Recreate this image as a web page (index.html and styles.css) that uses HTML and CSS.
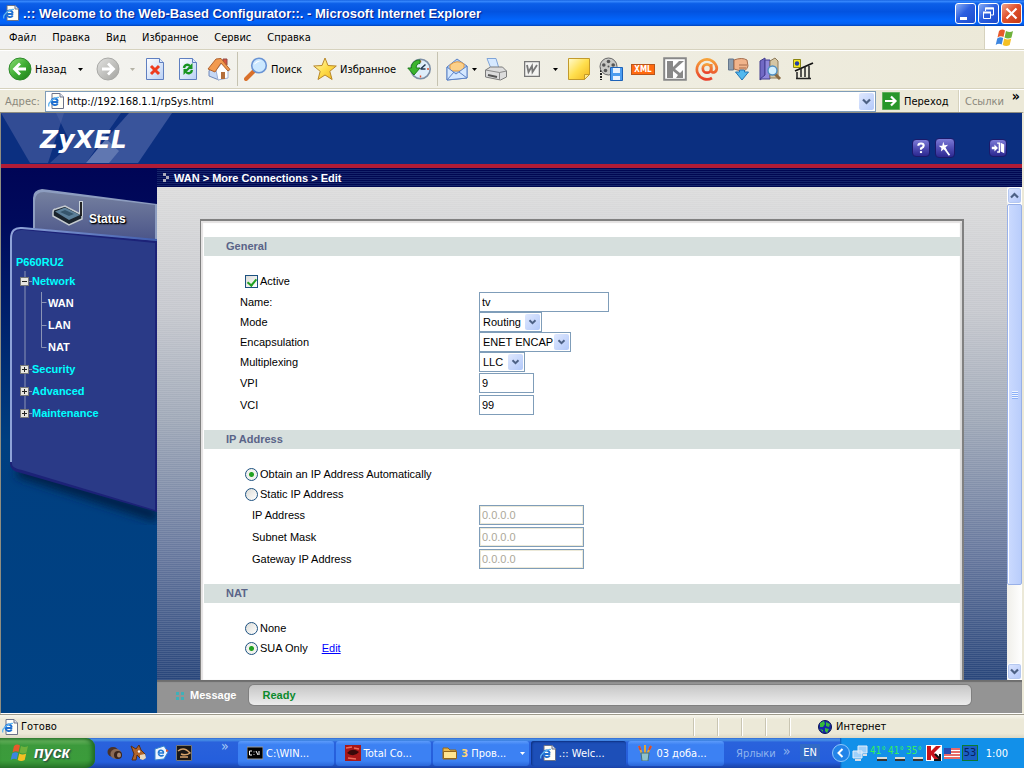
FILE: index.html
```html
<!DOCTYPE html>
<html lang="ru">
<head>
<meta charset="utf-8">
<title>.:: Welcome to the Web-Based Configurator::. - Microsoft Internet Explorer</title>
<link rel="stylesheet" href="styles.css">
</head>
<body>
<svg class="defs" aria-hidden="true">
  <defs>
    <linearGradient id="gGreen" x1="0" y1="0" x2="1" y2="1"><stop offset="0" stop-color="#8ede77"/><stop offset=".5" stop-color="#3fae33"/><stop offset="1" stop-color="#1d7d1b"/></linearGradient>
    <linearGradient id="gGrey" x1="0" y1="0" x2="1" y2="1"><stop offset="0" stop-color="#e2e2e0"/><stop offset="1" stop-color="#a3a39f"/></linearGradient>
    <linearGradient id="gPage" x1="0" y1="0" x2="1" y2="1"><stop offset="0" stop-color="#fff"/><stop offset="1" stop-color="#b9d0f5"/></linearGradient>
    <linearGradient id="gGold" x1="0" y1="0" x2="1" y2="1"><stop offset="0" stop-color="#fffbd0"/><stop offset=".5" stop-color="#ffdf4e"/><stop offset="1" stop-color="#f0b51c"/></linearGradient>
    <linearGradient id="gAt" x1="0" y1="0" x2="0" y2="1"><stop offset="0" stop-color="#f6a23a"/><stop offset="1" stop-color="#e8402c"/></linearGradient>
    <linearGradient id="gTab" x1="0" y1="0" x2="0" y2="1"><stop offset="0" stop-color="#75809f"/><stop offset="1" stop-color="#454f86"/></linearGradient>
    <linearGradient id="gSide" x1="0" y1="0" x2="0" y2="1"><stop offset="0" stop-color="#000556"/><stop offset=".1" stop-color="#000a5c"/><stop offset=".5" stop-color="#003f80"/><stop offset="1" stop-color="#004284"/></linearGradient>
    <linearGradient id="gEdge" x1="0" y1="0" x2="1" y2="0"><stop offset="0" stop-color="#8fa4d8"/><stop offset="1" stop-color="#3f5cae"/></linearGradient>
    <filter id="fBlur" x="-10%" y="-20%" width="120%" height="140%"><feGaussianBlur stdDeviation="4"/></filter>
    <symbol id="ie" viewBox="0 0 16 16">
      <path d="M4 .5h8l3.500 3.500v11.500h-11.500z" fill="#fffef6" stroke="#6c7388"/><path d="M12 .5v3.500h3.500" fill="#dfe6f2" stroke="#6c7388"/>
      <path d="M10.300 9H3.500a3.100 3.100 0 1 1 6.200-.8M9.800 10.500a3.300 3.300 0 0 1-6.100-1.500" fill="none" stroke="#1f6fd0" stroke-width="1.900"/>
      <path d="M1 13.500C-1 10 7 3.500 11 4.500" fill="none" stroke="#5fb4f0" stroke-width="1.200"/>
    </symbol>
    <symbol id="flag" viewBox="0 0 20 18">
      <path d="M4 2q3-2.500 6-.5L8.500 8q-3-1.500-6 .5z" fill="#e8592b"/><path d="M11 2q4 2 7 0l-1.500 6.500q-3.500 2-7 0z" fill="#6fb13c"/>
      <path d="M2.200 9.500q3-2 6-.5L6.700 15.500q-3-1.500-6 .5z" fill="#3d86e0"/><path d="M9.200 9.500q3.500 2 7 0L14.700 16q-3.500 2-7 0z" fill="#f5c024"/>
    </symbol>
    <symbol id="chev" viewBox="0 0 9 7"><path d="M1 1.500l3.500 3.500L8 1.500" fill="none" stroke="#4d6185" stroke-width="2.200"/></symbol>
  </defs>
</svg>

<header class="titlebar">
  <svg class="i16"><use href="#ie"/></svg>
  <h1>.:: Welcome to the Web-Based Configurator::. - Microsoft Internet Explorer</h1>
  <button class="win" aria-label="Minimize"><svg viewBox="0 0 19 19"><path d="M4 13h7v3H4z" fill="#fff"/></svg></button>
  <button class="win" aria-label="Restore"><svg viewBox="0 0 19 19" fill="none" stroke="#fff"><path d="M6.500 7V4h8v7H12"/><path d="M6 4.500h9" stroke-width="2"/><path d="M4.500 8.500h7v6h-7z"/><path d="M4 8.500h8" stroke-width="2"/></svg></button>
  <button class="win close" aria-label="Close"><svg viewBox="0 0 19 19"><path d="M4.500 4.500l10 10M14.500 4.500l-10 10" stroke="#fff" stroke-width="2.200"/></svg></button>
</header>

<nav class="menubar">
  <button>Файл</button><button>Правка</button><button>Вид</button><button>Избранное</button><button>Сервис</button><button>Справка</button>
  <span class="brand"><svg width="20" height="18"><use href="#flag"/></svg></span>
</nav>

<div class="toolbar">
  <button class="back"><svg class="i24" viewBox="0 0 24 24"><circle cx="12" cy="12" r="11" fill="url(#gGreen)" stroke="#2f8a2b"/><path d="M18 12H7M12 6.500L6.500 12l5.500 5.500" fill="none" stroke="#fff" stroke-width="2.800"/></svg>Назад</button>
  <button class="w16" aria-label="Back list"><svg class="tri"><path d="M0 0h5L2.500 3z"/></svg></button>
  <button class="w40" aria-label="Forward"><svg class="i24" viewBox="0 0 24 24"><circle cx="12" cy="12" r="11" fill="url(#gGrey)" stroke="#a9a9a6"/><path d="M6 12h11M12 6.500l5.500 5.500-5.500 5.500" fill="none" stroke="#fff" stroke-width="2.800"/></svg></button>
  <button class="w8" aria-label="Forward list"><svg class="tri off"><path d="M0 0h5L2.500 3z"/></svg></button>
  <button class="w38" aria-label="Stop"><svg class="i24" viewBox="0 0 24 24"><path d="M3.500 1.500h13l4 4v17h-17z" fill="url(#gPage)" stroke="#5f7fc0"/><path d="M16.500 1.500v4h4" fill="#dce8fb" stroke="#5f7fc0"/><path d="M8 9l8 8M16 9l-8 8" stroke="#ee3b1f" stroke-width="3"/></svg></button>
  <button class="w28" aria-label="Refresh"><svg class="i24" viewBox="0 0 24 24"><path d="M3.500 1.500h13l4 4v17h-17z" fill="url(#gPage)" stroke="#5f7fc0"/><path d="M16.500 1.500v4h4" fill="#dce8fb" stroke="#5f7fc0"/><path d="M8 11c.5-3.500 4-4 6-2M16 13c-.5 3.500-4 4-6 2" fill="none" stroke="#189421" stroke-width="2.400"/><path d="M16.500 6v6h-6zM7.500 18v-6h6z" fill="#189421"/></svg></button>
  <button class="w34" aria-label="Home"><svg class="i24" viewBox="0 0 24 24"><path d="M16 2h4v6h-4z" fill="#d8553f" stroke="#8f4a46"/><path d="M2 14l5-7 5 5v11l-10-4z" fill="#c5d8f6" stroke="#7089ba"/><path d="M9 13l6-7 6 7v8l-10 2z" fill="#fff" stroke="#9eb0d6"/><path d="M14 15h4v7h-4z" fill="#b46f3c"/><path d="M1 12L9 2l5-.5 9 11-2 1.500-7-8-6 9z" fill="#f29a4f" stroke="#b0622e"/></svg></button>
  <i class="sep s1"></i>
  <button class="search"><svg class="i24" viewBox="0 0 24 24"><path d="M2 22l8-8" stroke="#d9702b" stroke-width="4" stroke-linecap="round"/><circle cx="15" cy="8.500" r="7.300" fill="#cbe8ff" stroke="#6a94d4" stroke-width="1.600"/><path d="M10 8c1-4 5-5 8-4-3 0-6 2-8 4z" fill="#fff"/></svg>Поиск</button>
  <button class="fav"><svg class="i24" viewBox="0 0 24 24"><path d="M12 1l3 7.500 8.300.5-6.500 5.300 2.300 8.200-7.100-4.500L5 22.500l2.200-8.200L.7 9 9 8.500z" fill="url(#gGold)" stroke="#b8882a" stroke-linejoin="round"/></svg>Избранное</button>
  <button class="w36" aria-label="History"><svg class="i24" viewBox="0 0 24 24"><circle cx="13.500" cy="12" r="9.700" fill="#dfeefb" stroke="#7d8fa6" stroke-width="1.600"/><path d="M13.500 12l5-4.500M13.500 12h5" stroke="#24384f" stroke-width="1.500"/><path d="M13.500 3.500v2M13.500 18.500v2M20 12h2" stroke="#e0502f" stroke-width="1.400"/><path d="M13 3C7 3 4 7 4.500 11H.8L7 18l6-7H9.200C9 8 10.500 6.500 13 6.500z" fill="#3bb52f" stroke="#1e7c1c"/></svg></button>
  <i class="sep s2"></i>
  <button class="w28" aria-label="Mail"><svg class="i24" viewBox="0 0 24 24"><path d="M2 10L12 2l10 7v12L2 23z" fill="#a9ccf7" stroke="#5d83c6"/><path d="M5 8q7-6 14-1v7H5z" fill="#fbd08a" stroke="#e29a42"/><path d="M2 10l9 7 11-8v12L2 23z" fill="#d5e8ff" stroke="#5d83c6"/><path d="M2 23l7-8M22 21l-8-6" stroke="#5d83c6"/></svg></button>
  <button class="w6" aria-label="Mail list"><svg class="tri"><path d="M0 0h5L2.500 3z"/></svg></button>
  <button class="w38" aria-label="Print"><svg class="i24" viewBox="0 0 24 24"><path d="M3 1.500h9l3 10H7z" fill="#d6e9ff" stroke="#7fa4d8"/><path d="M1.500 13l5-3h12l4 4v6l-6 3-15-3z" fill="#dcdcdc" stroke="#7b7b7b"/><path d="M1.500 13l14 2.500 7-1.500M15.500 15.500V23" fill="none" stroke="#8a8a8a"/><path d="M4 18l9 2" stroke="#555" stroke-width="2"/></svg></button>
  <button class="w34" aria-label="Edit in Word"><svg class="i16" viewBox="0 0 16 16"><path d="M.5.500h15v15H.5z" fill="#f4f4f2" stroke="#777" stroke-width="1.500"/><path d="M3 4l1.500 7L8 5l.5 6L13 4" fill="none" stroke="#777" stroke-width="1.800"/></svg></button>
  <button class="w12" aria-label="Edit list"><svg class="tri"><path d="M0 0h5L2.500 3z"/></svg></button>
  <button class="w36" aria-label="Note"><svg class="i24" viewBox="0 0 24 24"><path d="M1.500 1.500h21v16l-5 5h-16z" fill="url(#gGold)" stroke="#c29a2c"/><path d="M17.500 22.500v-5h5z" fill="#ffeb8a" stroke="#c29a2c"/></svg></button>
  <button class="w28" aria-label="Save media"><svg class="i24" viewBox="0 0 24 24"><path d="M2 10v13" stroke="#222" stroke-width="2" stroke-dasharray="2 1"/><circle cx="9.500" cy="9.500" r="8.500" fill="#c9c9c5" stroke="#666"/><g fill="#555"><circle cx="9.500" cy="4.500" r="1.800"/><circle cx="4.800" cy="8" r="1.800"/><circle cx="14.200" cy="8" r="1.800"/><circle cx="6.500" cy="13.500" r="1.800"/><circle cx="9.500" cy="9.500" r="1"/></g><path d="M11.500 10.500h12v13h-12z" fill="#4b9cf0" stroke="#1d62b8"/><path d="M14 11h7v5h-7zM14 19h7v4h-7z" fill="#e8f2ff"/></svg></button>
  <button class="w36" aria-label="XML feed"><span class="xml">XML</span></button>
  <button class="w28" aria-label="Antivirus"><svg class="i24" viewBox="0 0 24 24"><path d="M1.200 1.200h21.600v21.600H1.200z" fill="#fff" stroke="#888" stroke-width="2"/><path d="M4 4h6v6l6-6h5l-9 8 5 4 3-3v8h-7l2-3-5-4v7H4z" fill="#888"/></svg></button>
  <button class="w36" aria-label="Mail agent"><svg class="i24" viewBox="0 0 24 24" fill="none" stroke="url(#gAt)" stroke-width="2.700"><circle cx="12" cy="11.500" r="4.200"/><path d="M16.200 7v6c0 4 5.600 3 5.600-2A10 10 0 1 0 17 21"/></svg></button>
  <button class="w28" aria-label="Downloader"><svg class="i24" viewBox="0 0 24 24"><path d="M1.500 2h5v11h-5z" fill="#8b9db0" stroke="#65778c"/><path d="M7 3q8-3 13 0l1 6q-2 6-7 5l-7-2z" fill="#f1b48b" stroke="#a66d4c"/><path d="M12 8l8 0M12 11h7" stroke="#a66d4c"/><path d="M12.500 13h5v2h4l-6.500 8-6.500-8h4z" fill="#52b9ef" stroke="#2274b3"/></svg></button>
  <button class="w34" aria-label="Reference"><svg class="i24" viewBox="0 0 24 24"><path d="M2 4l5-3v18l-5 4z" fill="#7169c4" stroke="#423c8e"/><path d="M7 3h5v19H2l5-4z" fill="#8f88dc" stroke="#423c8e"/><path d="M12 4l5-3 3 3v17h-8z" fill="#d5c6a4" stroke="#8d7a58"/><path d="M17 17l5 5" stroke="#8a6a42" stroke-width="3"/><circle cx="14.500" cy="13.500" r="4.500" fill="#d3f0ff" stroke="#4f8fc2" stroke-width="1.400"/></svg></button>
  <button class="w32" aria-label="Monitor"><svg class="i24" viewBox="0 0 24 24"><path d="M2.500 2.500h7v8h-7z" fill="#f6e71c" stroke="#8a8410"/><circle cx="6" cy="6.500" r="2.200" fill="#223fa5"/><path d="M4 14l18-8" stroke="#111" stroke-width="1.800"/><path d="M6 15v6M10 11v9M14 9v11M18 9v12M5 21.500h15" stroke="#222" stroke-width="1.500"/></svg></button>
</div>

<form class="addressbar">
  <label for="url">Адрес:</label>
  <div class="combo"><svg class="i16"><use href="#ie"/></svg><input id="url" type="text" value="http://192.168.1.1/rpSys.html"><button type="button" class="dd" aria-label="Address list"><svg><use href="#chev"/></svg></button></div>
  <button type="button" class="go"><svg viewBox="0 0 18 18"><path d="M.5.500h17v17H.5z" fill="#28962a" stroke="#5fae5b"/><path d="M3 9h10M9 4.500L13.500 9 9 13.500" fill="none" stroke="#fff" stroke-width="2.200"/></svg>Переход</button>
  <button type="button" class="links"><span>Ссылки</span><b>»</b></button>
</form>

<div class="viewport">
  <div class="banner">
    <svg class="wave" viewBox="0 0 172 50" width="172" height="50"><path d="M0 0h63l-16 50H29z" fill="#3c5499" opacity=".8"/><path d="M55 0h65L85 50H49l21-19z" fill="#4a62a4" opacity=".55"/><path d="M128 0h43l-34 50H85l20-24z" fill="#4a62a4" opacity=".75"/><path d="M105 26l13 12-10 12H85z" fill="#7086bb" opacity=".7"/></svg>
    <strong class="logo">ZyXEL</strong>
    <div class="tools">
      <button aria-label="Help"><svg viewBox="0 0 18 18"><path d="M6 6.500q0-2.500 3-2.500t3 2.500q0 1.500-3 3V11" fill="none" stroke="#fff" stroke-width="2.400"/><path d="M7.800 12.500h2.400v2.200H7.800z" fill="#fff"/></svg></button>
      <button class="big" aria-label="Wizard"><svg viewBox="0 0 20 20"><path d="M9 10l6 8" stroke="#fff" stroke-width="2"/><path d="M8 3l1.500 4 4-.5-3 3 2 3.500-4-1.500-3 2.500.5-4-3-2.500h4z" fill="#fff"/></svg></button>
      <button class="exit" aria-label="Logout"><svg viewBox="0 0 18 18"><path d="M2 7.500h3V5l4 4-4 4v-2.500H2zM12 3l4 2v10l-4-2z" fill="#fff"/><path d="M8 3.500h2.500v10H8" fill="none" stroke="#fff" stroke-width="1.500"/></svg></button>
    </div>
  </div>

  <div class="main">
    <nav class="sidebar">
      <svg class="art" viewBox="1 168 156 545" preserveAspectRatio="none">
        <path d="M1 168h156v545H1z" fill="url(#gSide)"/>
        <path d="M33 228v-30q0-8 9-9l115 15v42z" fill="#8d9dc0"/>
        <path d="M35 230v-29q0-9 9-9l111 13v42z" fill="url(#gTab)"/>
        <path d="M18 471l139 45" stroke="#002448" stroke-width="12" filter="url(#fBlur)"/>
        <path d="M10 464V238q0-12 11-11l136 14v271L21 473q-11-2-11-9z" fill="#1c2277"/>
        <path d="M12 464V240q0-11 11-10l132 13v267L22 470q-10-2-10-6z" fill="#2a3a87"/>
        <path d="M11 462V239q0-12 11-11l135 12" fill="none" stroke="url(#gEdge)" stroke-width="2"/>
        <path d="M25 271v142M25 281.500h7M41.500 292v55.500h5M41.500 302.500h5M41.500 325.500h5M25 369.500h7M25 391.500h7M25 413.500h7" fill="none" stroke="#8a94b6"/>
      </svg>
      <div class="navbody">
        <a class="status" href="#status"><svg viewBox="0 0 32 26"><path d="M29 1v15" stroke="#c9d2da" stroke-width="4"/><path d="M1 12q0-3 3-3l9-3 17 9v4l-13 6L1 16z" fill="#1a232c" stroke="#c5cbd0" stroke-width="1.500"/><path d="M3 11.500l10-4L28 15l-11 5z" fill="#5c7f99"/><path d="M8 12l5-2 9 4-5 2z" fill="#36556c"/><path d="M29 2v14" stroke="#111" stroke-width="1.800"/></svg>Status</a>
        <a class="model" href="#top">P660RU2</a>
        <ul class="tree">
          <li><button aria-label="Collapse"><svg viewBox="0 0 7 7"><path d="M1 3.500h5" stroke="#222"/></svg></button><a href="#n">Network</a></li>
          <li class="kid"><a href="#wan">WAN</a></li>
          <li class="kid"><a href="#lan">LAN</a></li>
          <li class="kid"><a href="#nat">NAT</a></li>
          <li><button aria-label="Expand"><svg viewBox="0 0 7 7"><path d="M1 3.500h5M3.500 1v5" stroke="#222"/></svg></button><a href="#s">Security</a></li>
          <li><button aria-label="Expand"><svg viewBox="0 0 7 7"><path d="M1 3.500h5M3.500 1v5" stroke="#222"/></svg></button><a href="#a">Advanced</a></li>
          <li><button aria-label="Expand"><svg viewBox="0 0 7 7"><path d="M1 3.500h5M3.500 1v5" stroke="#222"/></svg></button><a href="#m">Maintenance</a></li>
        </ul>
      </div>
    </nav>

    <div class="right">
      <div class="crumb"><svg width="7" height="9"><path d="M0 0h3v3H0zM3 3h3v3H3zM0 6h3v3H0z" fill="#aab"/></svg>WAN &gt; More Connections &gt; Edit</div>
      <div class="scroller">
        <div class="backdrop">
          <form class="panel">
            <h2>General</h2>
            <section>
              <label class="opt"><input type="checkbox" checked>Active</label>
              <div class="row name"><label for="name">Name:</label><input id="name" class="f130" type="text" value="tv"></div>
              <div class="row mid"><label for="mode">Mode</label><span class="sel"><select id="mode" class="f63"><option>Routing</option></select><svg><use href="#chev"/></svg></span></div>
              <div class="row mid"><label for="enc">Encapsulation</label><span class="sel"><select id="enc" class="f92"><option>ENET ENCAP</option></select><svg><use href="#chev"/></svg></span></div>
              <div class="row mid"><label for="mux">Multiplexing</label><span class="sel"><select id="mux" class="f46"><option>LLC</option></select><svg><use href="#chev"/></svg></span></div>
              <div class="row"><label for="vpi">VPI</label><input id="vpi" class="f55" type="text" value="9"></div>
              <div class="row"><label for="vci">VCI</label><input id="vci" class="f55" type="text" value="99"></div>
            </section>
            <h2>IP Address</h2>
            <section>
              <label class="opt"><input type="radio" name="ipmode" checked>Obtain an IP Address Automatically</label>
              <label class="opt"><input type="radio" name="ipmode">Static IP Address</label>
              <div class="row sub"><label for="ip">IP Address</label><input id="ip" class="f105" type="text" value="0.0.0.0" disabled></div>
              <div class="row sub"><label for="mask">Subnet Mask</label><input id="mask" class="f105" type="text" value="0.0.0.0" disabled></div>
              <div class="row sub"><label for="gw">Gateway IP Address</label><input id="gw" class="f105" type="text" value="0.0.0.0" disabled></div>
            </section>
            <h2>NAT</h2>
            <section>
              <label class="opt"><input type="radio" name="nat">None</label>
              <div class="optline"><label class="opt"><input type="radio" name="nat" checked>SUA Only</label><a href="#edit">Edit</a></div>
            </section>
          </form>
        </div>
        <div class="scrollbar">
          <button aria-label="Scroll up"><svg class="flip"><use href="#chev"/></svg></button>
          <div class="track"><div class="thumb"><i></i></div><div class="rest"></div></div>
          <button aria-label="Scroll down"><svg><use href="#chev"/></svg></button>
        </div>
      </div>
      <div class="message"><svg width="9" height="9"><path d="M0 1h3v3H0zM5 1h3v3H5zM0 6h3v3H0zM5 6h3v3H5z" fill="#3fb0b8"/></svg><span>Message</span><output>Ready</output></div>
    </div>
  </div>
</div>

<footer class="statusbar">
  <div class="done"><svg class="i16"><use href="#ie"/></svg>Готово</div>
  <i></i><i></i><i></i><i></i><i></i>
  <div class="zone"><svg class="i16" viewBox="0 0 16 16"><circle cx="8" cy="8" r="6.500" fill="#1426a8" stroke="#0a1450"/><path d="M3 4l4-2 1 3-2 3-3 0zM9 3l4 2-1 3-3-1zM8 9l4 1-2 4-2-2zM3 10l3 1 0 2z" fill="#35b83c"/></svg>Интернет</div>
</footer>

<footer class="taskbar">
  <button class="start"><svg width="20" height="18"><use href="#flag"/></svg>пуск</button>
  <div class="quick">
    <button aria-label="Disk tool"><svg class="i16" viewBox="0 0 16 16"><ellipse cx="6" cy="7" rx="5.500" ry="5" fill="#4b3127"/><ellipse cx="9" cy="9" rx="5.500" ry="5" fill="#8b6a55"/><ellipse cx="11" cy="10" rx="4" ry="4" fill="#3a241b"/><ellipse cx="12" cy="10" rx="2" ry="2.500" fill="#a98a74"/></svg></button>
    <button aria-label="eMule"><svg class="i16" viewBox="0 0 16 16"><path d="M1 1l5 3 3-4 2 5 4 4-1 5-4-1-3-3-1 5H2l2-6z" fill="#b0642b" stroke="#5b2d10"/><path d="M10 10l5-1 1 4-3 2-3-1z" fill="#ead8bd"/><circle cx="9" cy="6.500" r="1.200" fill="#fff"/></svg></button>
    <button aria-label="Outlook Express"><svg class="i16" viewBox="0 0 16 16"><path d="M2 4l9-3 4 6-4 7-9 1z" fill="#eef6ff" stroke="#3785ce"/><path d="M11 8H5.500a2.500 2.500 0 1 1 5-.5M10.500 10a3 3 0 0 1-5-1" fill="none" stroke="#2277d2" stroke-width="1.700"/><path d="M13 4l3 2-3 1z" fill="#e2522a"/></svg></button>
    <button aria-label="Player"><svg class="i16" viewBox="0 0 16 16"><path d="M.5.500h15v15H.5z" fill="#191715" stroke="#777"/><path d="M2 6q6-5 12 2-4 3-9 1M4 12h8" fill="none" stroke="#d6a36b" stroke-width="1.500"/></svg></button>
  </div>
  <b class="more">»</b>
  <div class="tasks">
    <button><svg class="i16" viewBox="0 0 16 16"><path d="M0 2h16v12H0z" fill="#000" stroke="#999"/><path d="M5 6H2.500v4H5M7 6.500v.8M7 9v.8M9 6l2 4M12 10V6" fill="none" stroke="#fff"/></svg>C:\WIN...</button>
    <button><svg class="i16" viewBox="0 0 16 16"><path d="M0 0h16v16H0z" fill="#a81818"/><path d="M2 8q5-6 12-1-5 6-12 1z" fill="#3a0a0a"/><path d="M1 3l6-1M9 3l5 1M3 13l8 1" stroke="#f06a5a" stroke-width="1.500"/></svg>Total Co...</button>
    <button class="group"><svg class="i16" viewBox="0 0 16 16"><path d="M1 3h5l2 2h6v9H1z" fill="#eab94b" stroke="#94661b"/><path d="M1.500 6.500h13v7h-13z" fill="#ffe591" stroke="#94661b"/></svg><span><b>3</b> Пров...</span><svg class="tri lite"><path d="M0 0h5L2.500 3z"/></svg></button>
    <button class="on"><svg class="i16"><use href="#ie"/></svg>.:: Welc...</button>
    <button><svg class="i16" viewBox="0 0 16 16"><path d="M5 9L2 1M8 9V0M10 9l4-8" stroke="#e0a83a" stroke-width="2"/><path d="M2 1l1.500 4M14 1l-2 4" stroke="#d84a32" stroke-width="2"/><path d="M4 8h8l-1 8H5z" fill="#8fc2c9" stroke="#42707f"/></svg>03 доба...</button>
  </div>
  <div class="shortcuts"><span>Ярлыки</span><b>»</b></div>
  <span class="lang">EN</span>
  <div class="tray">
    <button class="hide" aria-label="Hide icons"><svg viewBox="0 0 18 18"><circle cx="9" cy="9" r="8.500" fill="#2283e8" stroke="#8fc8fb"/><path d="M10.500 5L6.500 9l4 4" fill="none" stroke="#fff" stroke-width="2"/></svg></button>
    <svg class="i16" viewBox="0 0 16 16"><path d="M6 1h9v7H6zM1 6h9v7H1z" fill="#9fd0fa" stroke="#e6eef8"/><path d="M3 15h6M11 10h4" stroke="#d7dde6" stroke-width="2"/></svg>
    <span class="temps"><span>41°</span><span>41°</span><span>35°</span></span>
    <svg class="i16" viewBox="0 0 16 16"><path d="M0 0h16v16H0z" fill="#fff"/><path d="M1 1h4v5l5-5h5L8 8l6 7H9L5 10v5H1z" fill="#c8141b"/><path d="M9 9l5 5M14 9v6H8" stroke="#111" stroke-width="2" fill="none"/></svg>
    <svg class="i16" viewBox="0 0 16 16"><path d="M0 3h16v11H0z" fill="#fff"/><path d="M0 4h16M0 7h16M0 10h16M0 13h16" stroke="#e03a3a" stroke-width="1.500"/><path d="M0 3h7v6H0z" fill="#2b4bb0"/></svg>
    <span class="num">53</span>
    <time>1:00</time>
  </div>
</footer>
</body>
</html>
```
FILE: styles.css
```css
* { box-sizing: border-box; }
html, body { height: 100%; }
body {
  margin: 0;
  display: flex;
  flex-direction: column;
  min-height: 100vh;
  overflow: hidden;
  background: #ece9d8;
  color: #000;
  font: 11px "DejaVu Sans Condensed", "DejaVu Sans", sans-serif;
  white-space: nowrap;
}
button, input, select { font: inherit; color: inherit; }
button { margin: 0; padding: 0; border: 0; background: none; }
svg { flex: none; display: block; }
ul { list-style: none; margin: 0; padding: 0; }
.defs { position: absolute; width: 0; height: 0; }
.i16 { width: 16px; height: 16px; }
.i24 { width: 24px; height: 24px; }
.tri { width: 5px; height: 3px; fill: #000; }
.tri.off { fill: #b5b3a6; }
.tri.lite { fill: #fff; }

/* title bar */
.titlebar {
  flex: none;
  display: flex;
  align-items: center;
  gap: 2px;
  height: 26px;
  padding: 0 2px 0 3px;
  background: linear-gradient(#0a55d8 0, #3b8cff 4%, #0c5fe8 14%, #0353e0 45%, #0366fd 80%, #0360f2 92%, #0243b8);
}
.titlebar h1 {
  flex: 1;
  min-width: 0;
  margin: 0;
  padding-left: 2px;
  overflow: hidden;
  color: #fff;
  font: bold 13px "Liberation Sans", Arial, sans-serif;
  text-shadow: 1px 1px 1px #0a1883;
}
.win { width: 21px; height: 21px; border: 1px solid #fff; border-radius: 3px; background: linear-gradient(135deg, #8aaef5, #2c5fe0 45%, #1c4bcd); }
.win.close { background: linear-gradient(135deg, #f0a58c, #e0512c 45%, #c43a15); }
.win svg { width: 19px; height: 19px; }

/* menu */
.menubar {
  flex: none;
  display: flex;
  align-items: center;
  gap: 16px;
  height: 24px;
  padding-left: 9px;
  border-bottom: 1px solid #d6d2be;
  background: linear-gradient(90deg, #f2f1ef, #ece9d8);
}
.brand { margin-left: auto; display: flex; align-items: center; justify-content: center; width: 40px; height: 100%; border-left: 1px solid #d6d2be; background: #fff; }

/* toolbar */
.toolbar {
  flex: none;
  display: flex;
  align-items: center;
  height: 39px;
  padding: 0 0 1px 8px;
  border-top: 1px solid #fff;
  border-bottom: 1px solid #d6d2be;
  background: linear-gradient(90deg, #f4f4f1, #ece9d8);
}
.toolbar button { display: flex; align-items: center; justify-content: center; flex: none; gap: 3px; }
.toolbar .back { width: 64px; justify-content: flex-start; }
.toolbar .search { width: 68px; padding-left: 4px; justify-content: flex-start; }
.toolbar .fav { width: 93px; padding-left: 5px; justify-content: flex-start; }
.w6 { width: 6px; } .w8 { width: 8px; } .w12 { width: 12px; } .w16 { width: 16px; }
.w28 { width: 28px; } .w32 { width: 32px; } .w34 { width: 34px; } .w36 { width: 36px; } .w38 { width: 38px; } .w40 { width: 40px; }
.sep { width: 1px; height: 34px; background: #c6c3b1; }
.s1 { margin: 0 2px 0 1px; }
.s2 { margin-right: 5px; }
.xml { width: 24px; height: 11px; border: 1px solid #b8561d; background: #ff6a10; color: #fff; font: bold 8px/9px "DejaVu Sans Condensed", sans-serif; text-align: center; }

/* address bar */
.addressbar { flex: none; display: flex; align-items: center; height: 23px; margin: 0; border-top: 1px solid #fff; background: #ece9d8; }
.addressbar label { width: 45px; padding-left: 5px; color: #8a887c; }
.combo { flex: 1; min-width: 0; display: flex; align-items: center; gap: 3px; height: 21px; padding: 0 1px 0 2px; border: 1px solid #7f9db9; background: #fff; }
.combo input { flex: 1; min-width: 0; padding: 0; border: 0; outline: 0; }
.dd { width: 15px; height: 17px; display: flex; align-items: center; justify-content: center; border-radius: 2px; background: linear-gradient(135deg, #dfe8fe, #b3c9fa); }
.dd svg { width: 9px; height: 7px; }
.go { display: flex; align-items: center; gap: 4px; width: 83px; padding-left: 6px; }
.go svg { width: 18px; height: 18px; }
.links { display: flex; align-items: center; justify-content: space-between; width: 65px; height: 22px; padding: 0 4px 0 5px; border-left: 1px solid #fff; box-shadow: -1px 0 #d6d2be; color: #8a887c; }
.links b { color: #000; font-size: 14px; line-height: 12px; align-self: flex-start; }

/* router page */
.viewport {
  flex: 1;
  min-height: 0;
  display: flex;
  flex-direction: column;
  border: 1px solid #8f8d80;
  border-width: 1px 2px 1px 1px;
  border-right-color: #ece9d8;
  border-bottom-color: #fff;
  font-family: "Liberation Sans", Arial, sans-serif;
}
.banner { flex: none; display: grid; grid-template-columns: 1fr auto; height: 55px; border-bottom: 4px solid #b01c36; background: #0b2f80; }
.wave { grid-area: 1 / 1; }
.logo { grid-area: 1 / 1; z-index: 1; padding: 12px 0 0 39px; color: #fff; font: italic bold 25px/30px "DejaVu Sans", sans-serif; }
.tools { display: flex; align-items: center; gap: 5px; padding: 19px 15px 0 0; }
.tools button { width: 18px; height: 18px; border: 1px solid #1b1a6b; border-radius: 4px; background: linear-gradient(#7d7bd6, #5552b8 45%, #2c2890); }
.tools .big { width: 20px; height: 20px; }
.tools .exit { margin-left: 29px; }
.tools svg { width: 100%; height: 100%; }

.main { flex: 1; min-height: 0; display: flex; }
.sidebar { flex: none; width: 156px; display: grid; background: #004284; font-weight: bold; }
.sidebar a { color: #00ffff; text-decoration: none; }
.art { grid-area: 1 / 1; width: 156px; height: 100%; }
.navbody { grid-area: 1 / 1; z-index: 1; padding: 32px 0 0 15px; }
.sidebar .status { display: flex; align-items: flex-end; gap: 5px; padding-left: 36px; color: #fff; font-size: 12px; text-shadow: 1px 1px 2px #000, 1px 1px 1px #000; }
.status svg { width: 32px; height: 26px; }
.model { display: block; margin-top: 29px; line-height: 15px; }
.tree li { display: flex; align-items: center; height: 22px; padding-left: 4px; gap: 3px; }
.tree .kid { padding-left: 32px; }
.tree .kid a { color: #fff; }
.tree button { width: 9px; height: 9px; border: 1px solid #777; background: #e8e6e0; }
.tree svg { width: 7px; height: 7px; }

.right { flex: 1; min-width: 0; display: flex; flex-direction: column; }
.crumb { flex: none; display: flex; align-items: center; gap: 4px; height: 19px; padding-left: 6px; color: #fff; font-weight: bold; background: repeating-linear-gradient(#000752 0 1px, #16256b 1px 2px); }
.scroller { flex: 1; min-height: 0; display: flex; }
.backdrop {
  flex: 1;
  min-width: 0;
  overflow: hidden;
  padding: 32px 43px 0;
  background: repeating-linear-gradient(rgba(255,255,255,.1) 0 1px, transparent 1px 2px), linear-gradient(#dcdcdc, #c6c8ce 25%, #a0a9b8 47%, #66779d 75%, #28457a);
}
.panel { margin: 0; min-height: 100%; padding: 16px 2px 0 3px; border: 2px solid #808080; border-bottom: 0; border-left-width: 1px; background: #fff; box-shadow: inset 2px 2px 1px #e4e2e2, inset -2px 0 1px #d8d8d8; }
.panel h2 { margin: 0; padding-left: 22px; background: #d6dfdd; color: #5a6488; font-size: 11px; line-height: 19px; }
.panel section { padding: 15px 0 14px 36px; }
.opt { display: flex; align-items: center; gap: 2px; height: 20px; padding-left: 5px; }
.optline { display: flex; align-items: center; gap: 14px; }
.optline a { color: #00f; }
.row { display: flex; align-items: center; height: 22px; }
.row.mid { height: 20px; }
.row.name { height: 21px; }
.row label { width: 239px; }
.row.sub { padding-left: 12px; }
.row.sub label { width: 227px; }
.row input { height: 20px; padding: 0 2px; border: 1px solid #7f9db9; background: #fff; }
.row input:disabled { color: #aca899; box-shadow: inset 0 0 0 1px #ece9d8; }
.f130 { width: 130px; } .f105 { width: 105px; } .f92 { width: 92px; } .f63 { width: 63px; } .f55 { width: 55px; } .f46 { width: 46px; }
.sel { display: grid; align-items: center; }
.sel select { grid-area: 1 / 1; height: 20px; padding: 0 0 0 3px; appearance: none; border: 1px solid #7f9db9; border-radius: 0; background: #fff; outline: 0; }
.sel svg { grid-area: 1 / 1; z-index: 1; justify-self: end; width: 15px; height: 16px; margin-right: 2px; padding: 5px 3px; border-radius: 2px; background: linear-gradient(135deg, #dfe8fe, #b3c9fa); pointer-events: none; }
input[type=checkbox], input[type=radio] { appearance: none; width: 13px; height: 13px; margin: 0; border: 1px solid #1c5180; background: linear-gradient(135deg, #dcdcd7, #fff); }
input[type=radio] { border-radius: 50%; }
input[type=radio]:checked { background: radial-gradient(circle, #21a121 0 2px, #f2f2ee 3px); }
input[type=checkbox]:checked::before { content: ""; display: block; width: 4px; height: 7px; margin: 1px 0 0 3px; border: solid #21a121; border-width: 0 2px 2px 0; transform: rotate(40deg); }

.scrollbar { flex: none; width: 15px; display: flex; flex-direction: column; background: linear-gradient(90deg, #f0efea, #fff); }
.scrollbar button { flex: none; height: 17px; display: flex; align-items: center; justify-content: center; border: 1px solid #fff; border-radius: 3px; background: linear-gradient(135deg, #dbe5fe, #b3c7fa); box-shadow: inset 0 0 0 1px #b5c8f0; }
.scrollbar svg { width: 9px; height: 7px; }
.flip { transform: rotate(180deg); }
.track { flex: 1; display: flex; flex-direction: column; }
.thumb { flex: 83; display: flex; align-items: center; justify-content: center; border: 1px solid #98b0e8; border-radius: 2px; background: linear-gradient(90deg, #cbdafe, #b9cdfb); box-shadow: inset 1px 0 #fff; }
.thumb i { width: 6px; height: 8px; background: repeating-linear-gradient(#eef4fe 0 1px, #8cb0f8 1px 2px); }
.rest { flex: 17; }

.message { flex: none; display: flex; align-items: center; height: 33px; padding: 0 51px 3px 19px; gap: 5px; background: #949494; box-shadow: inset 0 2px 1px #6d6d6d; color: #fff; font-weight: bold; }
.message output { flex: 1; margin-left: 8px; height: 20px; padding-left: 13px; border-radius: 5px; background: linear-gradient(#c6c6c6, #ececec); box-shadow: 0 0 0 1px #808080; color: #0c8a2d; line-height: 20px; }

/* status bar */
.statusbar { flex: none; display: flex; align-items: center; height: 24px; border-top: 1px solid #9d9a8b; background: linear-gradient(#f7f6ee, #ece9d8 20%, #ece9d8 80%, #dcd8c4); }
.done { flex: 1; display: flex; align-items: center; gap: 3px; padding-left: 2px; }
.statusbar i { width: 24px; height: 18px; border-left: 1px solid #c9c5b2; box-shadow: inset 1px 0 #fff; }
.zone { display: flex; align-items: center; gap: 3px; width: 211px; height: 18px; padding-left: 4px; }

/* taskbar */
.taskbar { flex: none; display: flex; align-items: center; height: 30px; color: #fff; background: linear-gradient(#3168d5 0, #4993e6 6%, #2a62dc 14%, #245edc 80%, #1941a5); }
.start { display: flex; align-items: center; gap: 4px; width: 95px; height: 100%; padding-left: 10px; border-radius: 0 9px 9px 0; background: linear-gradient(#3c8a3c 0, #5eac56 10%, #3c9a3c 25%, #3b9c3b 75%, #2c7a2c); box-shadow: inset -3px 0 4px #1f6a24; font: italic bold 16px "Liberation Sans", sans-serif; text-shadow: 1px 1px 2px #234; }
.quick { display: flex; gap: 7px; padding-left: 12px; width: 124px; }
.more { align-self: flex-start; width: 19px; height: 20px; padding-left: 2px; color: #a8ccf6; font-size: 14px; font-weight: normal; line-height: 16px; }
.tasks { flex: 1; min-width: 0; display: flex; gap: 2px; max-width: 488px; }
.tasks button { flex: 1; min-width: 0; display: flex; align-items: center; gap: 3px; height: 25px; padding: 0 4px 0 9px; overflow: hidden; border-radius: 3px; background: linear-gradient(#5c9bfb, #3c81f3 15%, #3c81f3 80%, #2a66d8); }
.tasks .on { background: #1d4fb8; box-shadow: inset 1px 1px 2px #0d3080; }
.group b { color: #ffd57a; }
.group .tri { margin-left: auto; }
.shortcuts { display: flex; gap: 7px; margin-left: auto; padding-left: 12px; width: 76px; color: #8fb4ee; }
.shortcuts b { font-size: 14px; font-weight: normal; line-height: 8px; }
.lang { width: 20px; height: 18px; line-height: 18px; text-align: center; background: #316ac5; margin-right: 12px; }
.tray { flex: none; display: flex; align-items: center; gap: 2px; width: 192px; height: 100%; padding-right: 16px; background: linear-gradient(90deg, transparent 8px, #0c59b9 8px, #1290e9 10px); }
.hide svg { width: 18px; height: 18px; }
.temps { display: flex; color: #35ef5d; font-size: 10px; }
.temps span { width: 18px; padding-bottom: 4px; line-height: 12px; background: linear-gradient(#d8dcd8 0 2px, #333 2px) right 1px bottom / 10px 4px no-repeat; }
.num { width: 16px; height: 16px; border: 1px solid #0b7a33; background: #1a5fc4; color: #08205e; line-height: 14px; text-align: center; }
.tray time { margin-left: auto; }
```
